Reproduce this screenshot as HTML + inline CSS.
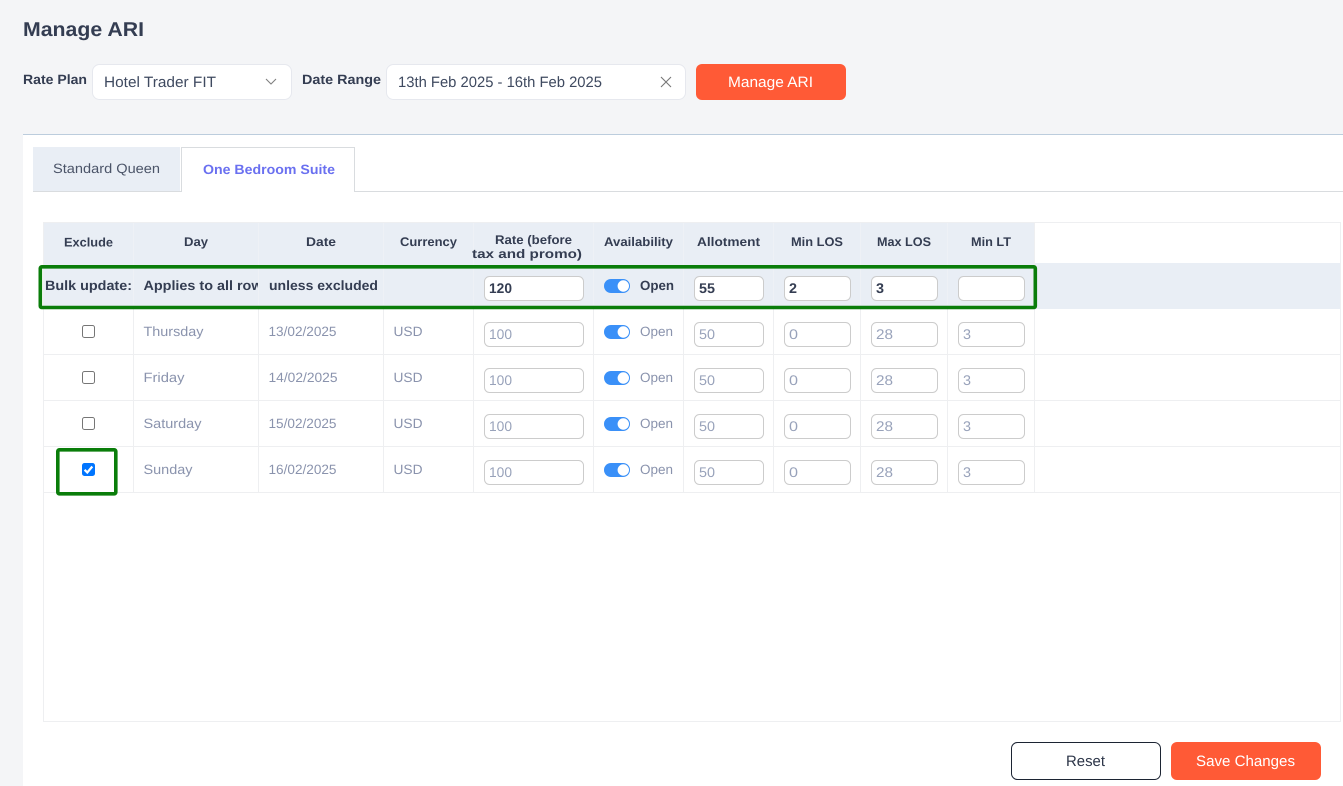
<!DOCTYPE html>
<html lang="en"><head><meta charset="utf-8"><title>Manage ARI</title>
<style>
html,body{margin:0;padding:0;width:1343px;height:786px;overflow:hidden;background:#f4f5f7}
svg{display:block}
text{font-family:"Liberation Sans",Arial,sans-serif;font-size:13.5px;fill:#8a93ad;}
.h{font-weight:700;fill:#343d52;font-size:12.5px}
.b{font-weight:700;fill:#343d52;font-size:13.5px}
.i{fill:#98a2ba;font-size:14px}
.v{font-weight:700;fill:#343d52;font-size:14px}
.f{fill:#3f4a60;font-size:15px}
.w{fill:#fff;font-size:15px}
.ip{fill:#fff;stroke:#ccc;stroke-width:1}
.bx{fill:#fff;stroke:#767676;stroke-width:1}
.ln{stroke:#eeeff1;stroke-width:1}
.gr{fill:none;stroke:#0a7d0a;stroke-width:3.6}
</style></head><body>
<svg width="1343" height="786" viewBox="0 0 1343 786" xmlns="http://www.w3.org/2000/svg" text-rendering="geometricPrecision">
<defs>
<g id="t"><rect x="604" y="0" width="26" height="14" rx="7" fill="#3a90f8"/><circle cx="623.300" cy="7" r="5.700" fill="#fff"/></g>
<g id="row">
<rect class="ip" x="484.500" y="13.500" width="99" height="24" rx="5"/>
<rect class="ip" x="694.500" y="13.500" width="69" height="24" rx="5"/>
<rect class="ip" x="784.500" y="13.500" width="66" height="24" rx="5"/>
<rect class="ip" x="871.500" y="13.500" width="66" height="24" rx="5"/>
<rect class="ip" x="958.500" y="13.500" width="66" height="24" rx="5"/>
<use href="#t" y="16"/>
<text x="640" y="27" textLength="33" lengthAdjust="spacingAndGlyphs">Open</text>
<text x="393.500" y="27" textLength="29" lengthAdjust="spacingAndGlyphs">USD</text>
<text class="i" x="489" y="30" textLength="23" lengthAdjust="spacingAndGlyphs">100</text>
<text class="i" x="699" y="30" textLength="16" lengthAdjust="spacingAndGlyphs">50</text>
<text class="i" x="789" y="30" textLength="9" lengthAdjust="spacingAndGlyphs">0</text>
<text class="i" x="876" y="30" textLength="17" lengthAdjust="spacingAndGlyphs">28</text>
<text class="i" x="963" y="30" textLength="8" lengthAdjust="spacingAndGlyphs">3</text>
</g>
</defs>

<rect width="1343" height="786" fill="#f4f5f7"/>
<text x="23" y="36" textLength="121" lengthAdjust="spacingAndGlyphs" style="font-size:20px;font-weight:700;fill:#343d52">Manage ARI</text>

<text class="b" x="23" y="84" textLength="64" lengthAdjust="spacingAndGlyphs">Rate Plan</text>
<rect x="92.500" y="64.500" width="199" height="35" rx="7" fill="#fff" stroke="#e6e8ee"/>
<text class="f" x="104" y="87" textLength="112" lengthAdjust="spacingAndGlyphs">Hotel Trader FIT</text>
<path d="M266 79l5 5 5-5" fill="none" stroke="#808080" stroke-width="1.100"/>
<text class="b" x="302" y="84" textLength="79" lengthAdjust="spacingAndGlyphs">Date Range</text>
<rect x="386.500" y="64.500" width="299" height="35" rx="7" fill="#fff" stroke="#e6e8ee"/>
<text class="f" x="398" y="87" textLength="204" lengthAdjust="spacingAndGlyphs">13th Feb 2025 - 16th Feb 2025</text>
<path d="M661 77l10 10M671 77l-10 10" fill="none" stroke="#777" stroke-width="1.100"/>
<rect x="696" y="64" width="150" height="36" rx="6" fill="#ff5a36"/>
<text class="w" x="728" y="87" textLength="85" lengthAdjust="spacingAndGlyphs">Manage ARI</text>

<rect x="23" y="134" width="1320" height="652" fill="#fff"/>
<rect x="23" y="134" width="1320" height="1" fill="#bccddd"/>

<rect x="33" y="147" width="147" height="44" fill="#e9eef5"/>
<rect x="33" y="191" width="1310" height="1" fill="#d9dcdf"/>
<path d="M181.500 192V147.500H354.500V192" fill="#fff" stroke="#d9dcdf"/>
<rect x="182" y="190" width="172" height="2" fill="#fff"/>
<text x="53" y="173" textLength="107" lengthAdjust="spacingAndGlyphs" style="fill:#4b5468">Standard Queen</text>
<text x="203" y="174" textLength="132" lengthAdjust="spacingAndGlyphs" style="fill:#6a70f0;font-weight:700">One Bedroom Suite</text>

<rect class="ln" x="43.500" y="222.500" width="1297" height="499" fill="#fff"/>
<rect x="44" y="223" width="991" height="40" fill="#e9eef5"/>
<rect x="44" y="263" width="1296" height="46" fill="#e9eef5"/>
<path class="ln" d="M133.500 309V493M258.500 309V493M383.500 309V493M473.500 309V493M593.500 309V493M683.500 309V493M773.500 309V493M860.500 309V493M947.500 309V493M1034.500 223V493M44 354.500H1340M44 400.500H1340M44 446.500H1340M44 492.500H1340"/>
<path d="M133.500 223V305M258.500 223V305M383.500 223V305M473.500 223V305M593.500 223V305M683.500 223V305M773.500 223V305M860.500 223V305M947.500 223V305" stroke="#eef1f6"/>

<text class="h" x="64" y="246.500" textLength="49" lengthAdjust="spacingAndGlyphs">Exclude</text>
<text class="h" x="184" y="246" textLength="24" lengthAdjust="spacingAndGlyphs">Day</text>
<text class="h" x="306" y="246" textLength="30" lengthAdjust="spacingAndGlyphs">Date</text>
<text class="h" x="400" y="246" textLength="57" lengthAdjust="spacingAndGlyphs">Currency</text>
<text class="h" x="495" y="244" textLength="77" lengthAdjust="spacingAndGlyphs">Rate (before</text>
<text class="h" x="472" y="258" textLength="110" lengthAdjust="spacingAndGlyphs">tax and promo)</text>
<text class="h" x="604" y="246" textLength="69" lengthAdjust="spacingAndGlyphs">Availability</text>
<text class="h" x="697" y="246" textLength="63" lengthAdjust="spacingAndGlyphs">Allotment</text>
<text class="h" x="791" y="246" textLength="52" lengthAdjust="spacingAndGlyphs">Min LOS</text>
<text class="h" x="877" y="246" textLength="54" lengthAdjust="spacingAndGlyphs">Max LOS</text>
<text class="h" x="971" y="246" textLength="40" lengthAdjust="spacingAndGlyphs">Min LT</text>

<text class="b" x="45" y="290" textLength="87" lengthAdjust="spacingAndGlyphs">Bulk update:</text>
<svg x="133" y="270" width="125" height="30"><text class="b" x="10.500" y="20" textLength="127" lengthAdjust="spacingAndGlyphs">Applies to all rows</text></svg>
<text class="b" x="269" y="290" textLength="109" lengthAdjust="spacingAndGlyphs">unless excluded</text>
<rect class="ip" x="484.500" y="276.500" width="99" height="24" rx="5"/>
<rect class="ip" x="694.500" y="276.500" width="69" height="24" rx="5"/>
<rect class="ip" x="784.500" y="276.500" width="66" height="24" rx="5"/>
<rect class="ip" x="871.500" y="276.500" width="66" height="24" rx="5"/>
<rect class="ip" x="958.500" y="276.500" width="66" height="24" rx="5"/>
<text class="v" x="489" y="293" textLength="23" lengthAdjust="spacingAndGlyphs">120</text>
<text class="v" x="699" y="293" textLength="16" lengthAdjust="spacingAndGlyphs">55</text>
<text class="v" x="789" y="293" textLength="8" lengthAdjust="spacingAndGlyphs">2</text>
<text class="v" x="876" y="293" textLength="8" lengthAdjust="spacingAndGlyphs">3</text>
<use href="#t" y="279"/>
<text class="b" x="640" y="290" textLength="34" lengthAdjust="spacingAndGlyphs">Open</text>

<use href="#row" y="309"/><use href="#row" y="355"/><use href="#row" y="401"/><use href="#row" y="447"/>

<rect class="bx" x="82.500" y="325.500" width="12" height="12" rx="2"/>
<rect class="bx" x="82.500" y="371.500" width="12" height="12" rx="2"/>
<rect class="bx" x="82.500" y="417.500" width="12" height="12" rx="2"/>
<rect x="82" y="463" width="13" height="13" rx="2.500" fill="#0075ff"/>
<path d="M84.600 469.800l2.700 2.700 5-6" fill="none" stroke="#fff" stroke-width="2.200"/>

<text x="143.500" y="336" textLength="60" lengthAdjust="spacingAndGlyphs">Thursday</text>
<text x="143.500" y="382" textLength="41" lengthAdjust="spacingAndGlyphs">Friday</text>
<text x="143.500" y="428" textLength="58" lengthAdjust="spacingAndGlyphs">Saturday</text>
<text x="143.500" y="474" textLength="49" lengthAdjust="spacingAndGlyphs">Sunday</text>
<text x="268.500" y="336" textLength="68" lengthAdjust="spacingAndGlyphs">13/02/2025</text>
<text x="268.500" y="382" textLength="69" lengthAdjust="spacingAndGlyphs">14/02/2025</text>
<text x="268.500" y="428" textLength="68" lengthAdjust="spacingAndGlyphs">15/02/2025</text>
<text x="268.500" y="474" textLength="68" lengthAdjust="spacingAndGlyphs">16/02/2025</text>

<rect class="gr" x="40.300" y="266.800" width="995" height="40.700" rx="1.500"/>
<rect class="gr" x="57.800" y="449.800" width="58" height="44" rx="1.500"/>

<rect x="1011.500" y="742.500" width="149" height="37" rx="6" fill="#fff" stroke="#1c2433"/>
<text x="1066" y="766" textLength="39" lengthAdjust="spacingAndGlyphs" style="fill:#2c3548;font-size:15px">Reset</text>
<rect x="1171" y="742" width="150" height="38" rx="6" fill="#ff5a36"/>
<text class="w" x="1196" y="766" textLength="99" lengthAdjust="spacingAndGlyphs">Save Changes</text>
</svg>
</body></html>
